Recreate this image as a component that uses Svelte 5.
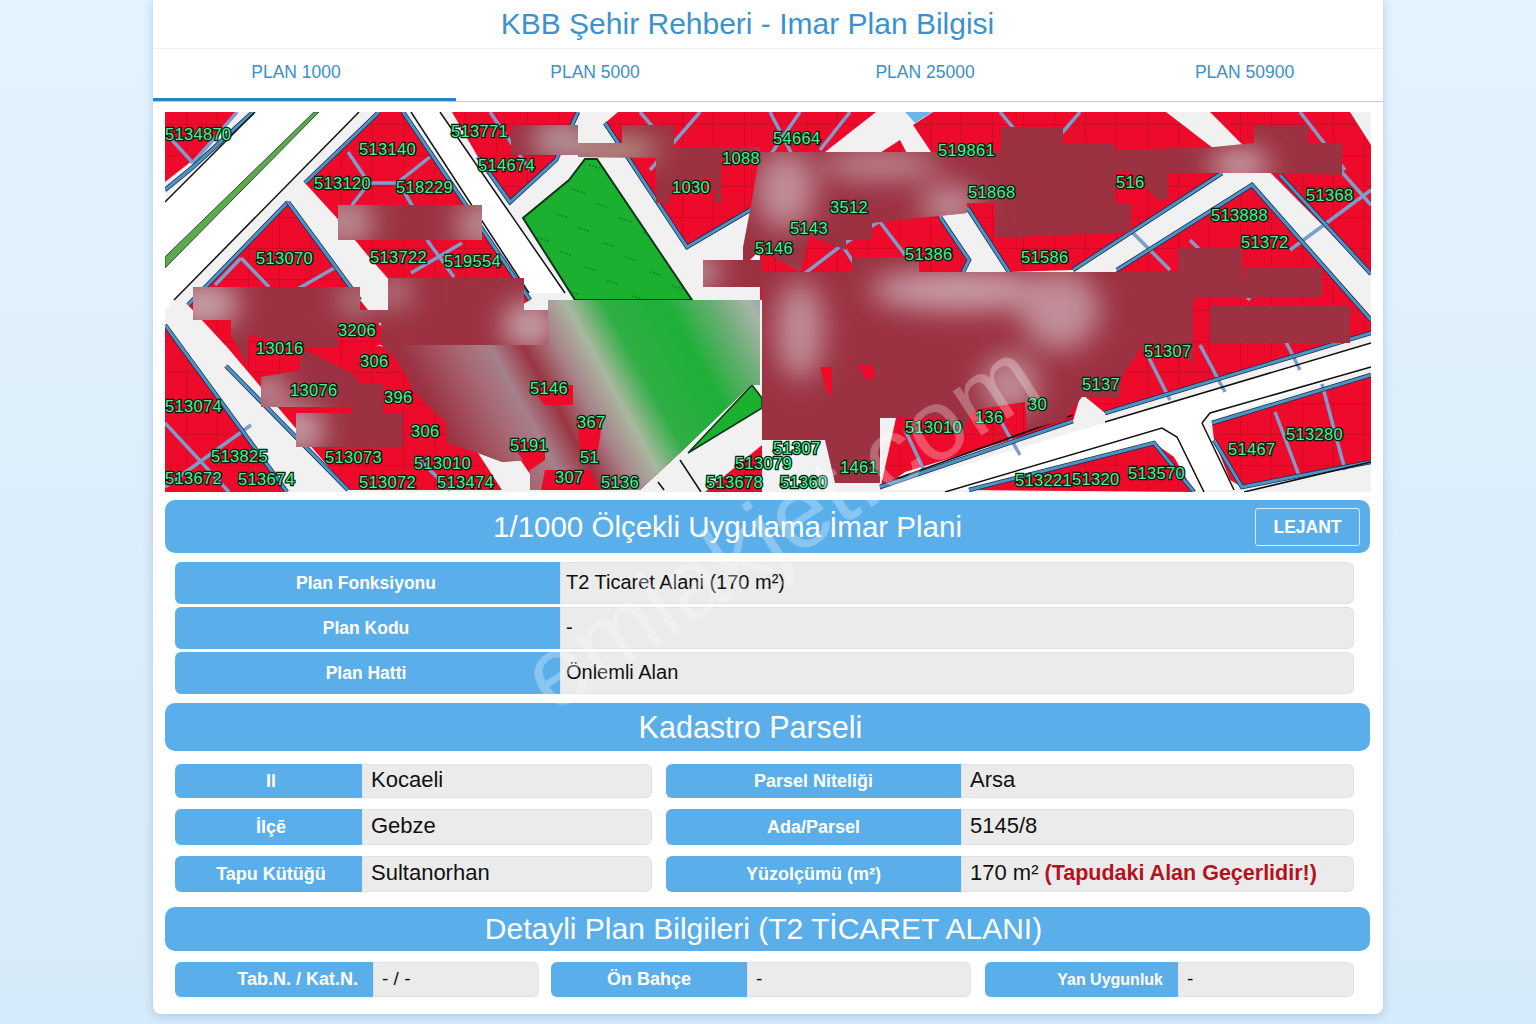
<script>
  const tabs = ['PLAN 1000', 'PLAN 5000', 'PLAN 25000', 'PLAN 50900'];

  const planRows = [
    { label: 'Plan Fonksiyonu', value: 'T2 Ticaret Alani (170 m²)' },
    { label: 'Plan Kodu', value: '-' },
    { label: 'Plan Hatti', value: 'Önlemli Alan' }
  ];

  // harita: ekran koordinatlari (viewBox 165 112 1206 380)
  const blocks = [
    '165,112 237,112 193,160 165,182',
    '379,112 403,112 472,213 530,300 480,330 407,300 369,257 336,217 305,183',
    '288,202 360,300 400,350 381,345 340,350 300,330 225,345 188,305',
    '165,325 287,492 165,492',
    '221,340 300,330 400,350 446,423 478,453 502,490 348,490',
    '530,370 610,400 640,490 541,490 500,430',
    '452,112 578,112 556,160 510,202 478,157',
    '605,123 618,112 876,112 755,207 687,247',
    '913,125 933,112 1166,112 1222,155 1222,173 1073,270 1009,272 967,207 950,180',
    '760,230 900,140 940,217 969,260 963,272 760,300',
    '1252,185 1371,320 1371,333 1105,413 1077,390 1100,300 1117,270',
    '1210,112 1350,112 1371,145 1371,274',
    '880,490 905,472 1073,421 1085,380 1000,330 900,400',
    '1212,423 1371,375 1371,462 1242,487 1230,480 1214,440',
    '969,490 1154,443 1174,457 1194,492',
    '705,492 762,445 762,492'
  ];

  const parcelLines = [
    '172,140 193,163', '193,163 237,112', '348,152 369,183', '430,157 397,183', '369,183 397,183', '352,205 369,183',
    '403,190 419,217', '462,243 411,273', '427,240 454,277', '241,258 269,287', '241,258 215,285', '296,290 336,267',
    '490,112 530,170', '640,112 690,170', '700,112 650,170',
    '770,112 800,170', '800,112 760,170', '850,112 820,150', '1000,112 1040,160', '1080,112 1030,170',
    '770,300 842,245 905,205', '842,245 860,272', '880,222 918,272',
    '1120,220 1170,270', '1190,240 1250,300', '1300,112 1345,170', '1340,170 1371,205', '1290,250 1371,190',
    '1145,350 1170,400', '1200,345 1225,392', '1280,330 1300,370', '1000,420 1020,455', '905,430 925,472',
    '165,423 229,492', '251,425 165,487', '420,460 450,490', '1275,412 1300,478', '1322,384 1345,470'
  ];

  const blueLines = [
    '165,190 193,167 253,112', '305,183 379,112', '403,112 530,300', '288,202 188,305', '288,202 360,300',
    '165,325 287,492', '226,366 348,490', '478,157 510,202 556,160 578,112', '605,123 687,247 755,207',
    '1073,270 1222,173', '1117,270 1252,185 1371,320', '1280,175 1371,274', '880,487 1073,421', '1105,413 1371,333',
    '1212,423 1371,375', '1214,440 1242,487 1371,462', '969,490 1154,443 1194,492', '967,207 1009,272', '940,217 969,260 963,272'
  ];

  const blackLines = [
    '165,202 255,112', '174,300 359,112', '411,112 529,293', '440,112 565,293', '893,480 1073,415', '1105,422 1371,343',
    '1202,423 1210,413 1371,367', '1202,423 1234,490', '945,492 1162,428 1177,437 1204,492', '1244,492 1371,462',
    '680,460 701,492', '658,482 664,490'
  ];

  const park = '585,159 597,159 692,300 575,300 523,218 569,180';

  // bulanik alanlar
  const fan = '397,345 548,345 548,300 760,300 760,385 751,385 680,453 640,490 530,490 530,460 502,462 478,453 446,443 446,423 415,393 397,360';
  const blurPolys = [
    '511,125 578,125 578,143 622,143 622,125 674,125 674,147 760,147 760,160 721,160 721,203 715,203 710,177 673,187 668,203 656,203 656,158 578,157 578,155 511,155',
    '760,152 1001,152 1001,127 1063,127 1063,143 1115,143 1115,150 1214,147 1254,143 1254,125 1308,125 1308,143 1342,143 1342,175 1280,173 1141,173 1168,172 1168,200 1158,200 1130,172 1115,172 1115,203 1131,203 1131,232 995,238 995,203 967,203 967,213 872,223 872,240 846,240 846,250 810,236 800,272 760,250 743,267 743,247 752,200',
    '703,260 762,260 762,287 703,287',
    '338,205 482,205 482,240 338,240',
    '762,272 852,272 852,257 919,257 919,272 1178,272 1178,248 1242,248 1242,283 1244,267 1322,267 1322,298 1193,298 1193,365 1180,345 1143,345 1121,378 1120,397 1082,397 1065,420 1027,430 1025,402 973,410 961,437 940,418 880,418 880,483 835,483 825,440 762,440',
    '1210,305 1350,305 1350,343 1210,343',
    '193,287 360,287 360,320 193,320',
    '388,278 524,278 524,310 388,310',
    '410,310 548,310 548,345 410,345',
    '231,320 338,320 338,347 304,347 249,335 247,365 231,335',
    '338,310 388,310 388,323 338,323',
    '381,310 410,310 410,345 397,360 381,345',
    '300,347 351,373 352,407 261,407 261,377 300,370',
    '351,373 360,383 383,383 383,413 352,413',
    '296,413 403,413 403,447 296,447',
    fan
  ];

  const holes = [
    '530,385 573,385 573,405 545,405',
    '577,417 603,417 598,450 580,450',
    '510,442 545,442 545,460 530,470',
    '545,470 590,470 600,490 541,490',
    '820,367 832,367 832,397 826,390',
    '858,365 874,365 874,380 866,380'
  ];

  const labels = [
    ['5134870', 165, 134], ['513140', 359, 149], ['513120', 314, 183], ['518229', 396, 187], ['513070', 256, 258],
    ['513722', 370, 257], ['519554', 444, 261], ['513771', 451, 131], ['514674', 478, 165], ['54664', 773, 138],
    ['519861', 938, 150], ['51368', 1306, 195], ['513888', 1211, 215], ['51372', 1241, 242], ['51586', 1021, 257],
    ['51386', 905, 254], ['513074', 165, 406], ['513825', 211, 456], ['513672', 165, 478], ['513674', 238, 479],
    ['513073', 325, 457], ['513010', 414, 463], ['513072', 359, 482], ['513474', 437, 482], ['306', 411, 431],
    ['5146', 530, 388], ['367', 577, 422], ['5191', 510, 445], ['5136', 601, 482], ['513010', 905, 427],
    ['51307', 773, 448], ['513079', 735, 463], ['513678', 706, 482], ['51360', 780, 482], ['1461', 840, 467],
    ['51467', 1228, 449], ['513280', 1286, 434], ['513221', 1015, 480], ['51320', 1072, 479], ['513570', 1128, 473],
    ['51307', 1144, 351], ['5137', 1082, 384], ['136', 975, 417], ['30', 1028, 404], ['3206', 338, 330],
    ['13016', 256, 348], ['13076', 290, 390], ['306', 360, 361], ['396', 384, 397], ['307', 555, 477], ['51', 580, 457],
    ['3512', 830, 207], ['5143', 790, 228], ['5146', 755, 248], ['51868', 968, 192], ['516', 1116, 182],
    ['1030', 672, 187], ['1088', 722, 158]
  ];

  const dots = [];
  for (let i = 0; i < 120; i++) {
    dots.push([525 + ((i * 47) % 170), 160 + ((i * 29) % 140)]);
  }
</script>

<div class="page">
  <div class="card">
    <h1 class="title">KBB Şehir Rehberi - Imar Plan Bilgisi</h1>

    <nav class="tabs">
      {#each tabs as tab, i}
        <div class="tab" class:active={i === 0}>{tab}</div>
      {/each}
    </nav>

    <div class="body">
      <svg class="map" viewBox="165 112 1206 380" width="1206" height="380">
        <defs>
          <pattern id="grid" width="31" height="31" patternUnits="userSpaceOnUse">
            <rect width="31" height="31" fill="#ee0a2a" />
            <path d="M31 0H0V31" fill="none" stroke="#a50a20" stroke-width="0.8" />
          </pattern>
          <linearGradient id="fan" gradientUnits="userSpaceOnUse" x1="450" y1="440" x2="770" y2="265">
            <stop offset="0" stop-color="#9b3141" />
            <stop offset="0.15" stop-color="#a86a76" />
            <stop offset="0.22" stop-color="#a5808a" />
            <stop offset="0.3" stop-color="#9b3542" />
            <stop offset="0.38" stop-color="#a8828a" />
            <stop offset="0.46" stop-color="#a9b8a0" />
            <stop offset="0.55" stop-color="#2fae45" />
            <stop offset="0.7" stop-color="#1eb038" />
            <stop offset="0.82" stop-color="#6fae78" />
            <stop offset="0.9" stop-color="#a8b5a8" />
            <stop offset="0.97" stop-color="#7f96c8" />
          </linearGradient>
          <filter id="soft" x="-50%" y="-50%" width="200%" height="200%">
            <feGaussianBlur stdDeviation="14" />
          </filter>
          <clipPath id="blurClip">
            {#each blurPolys as p}
              <polygon points={p} />
            {/each}
          </clipPath>
          <clipPath id="parkClip">
            <polygon points={park} />
          </clipPath>
        </defs>

        <rect x="165" y="112" width="1206" height="380" fill="#f1f1f1" />
        <polygon points="165,202 255,112 359,112 174,300 165,310" fill="#fff" />
        <polygon points="411,112 440,112 565,293 529,293" fill="#fff" />
        <polygon points="880,490 1371,343 1371,367 1202,423 1234,490" fill="#fff" />
        <polygon points="905,112 932,112 915,123" fill="#6fb6e8" />
        <polygon points="314,112 319,112 165,268 165,257" fill="#5fa84f" stroke="#24552a" stroke-width="1" />

        {#each blocks as p}
          <polygon points={p} fill="url(#grid)" />
        {/each}

        <polygon points={park} fill="#1bb02f" stroke="#10351a" stroke-width="2" />
        <g clip-path="url(#parkClip)">
          {#each dots as d}
            <circle cx={d[0]} cy={d[1]} r="0.8" fill="#0c6a1d" />
          {/each}
        </g>
        <polygon points="688,453 752,385 762,398 762,408" fill="#1bb02f" stroke="#10351a" stroke-width="1.5" />

        {#each parcelLines as p}
          <polyline points={p} fill="none" stroke="#7e9ccc" stroke-width="3.5" />
        {/each}
        {#each blueLines as p}
          <polyline points={p} fill="none" stroke="#12304e" stroke-width="4.5" />
          <polyline points={p} fill="none" stroke="#4f93c4" stroke-width="3" />
        {/each}
        {#each blackLines as p}
          <polyline points={p} fill="none" stroke="#111" stroke-width="1.5" />
        {/each}

        <g clip-path="url(#blurClip)">
          <rect x="165" y="112" width="1206" height="380" fill="#9b3141" />
          <g filter="url(#soft)">
            <ellipse cx="785" cy="190" rx="30" ry="40" fill="#c08d98" />
            <ellipse cx="880" cy="165" rx="60" ry="14" fill="#c08d98" />
            <ellipse cx="950" cy="205" rx="30" ry="20" fill="#c08d98" />
            <ellipse cx="1240" cy="165" rx="30" ry="16" fill="#cfa9b0" />
            <ellipse cx="610" cy="150" rx="50" ry="10" fill="#bfc0a8" />
            <ellipse cx="560" cy="140" rx="28" ry="20" fill="#b59aa0" />
            <ellipse cx="960" cy="290" rx="90" ry="20" fill="#c9a0aa" />
            <ellipse cx="1060" cy="310" rx="40" ry="40" fill="#c08d98" />
            <ellipse cx="800" cy="330" rx="24" ry="50" fill="#c08d98" />
            <ellipse cx="1010" cy="385" rx="28" ry="30" fill="#c08d98" />
            <ellipse cx="345" cy="222" rx="30" ry="26" fill="#b98a92" />
            <ellipse cx="485" cy="225" rx="30" ry="26" fill="#b98a92" />
            <ellipse cx="205" cy="305" rx="34" ry="24" fill="#c6a3aa" />
            <ellipse cx="355" cy="300" rx="16" ry="16" fill="#b98a92" />
            <ellipse cx="395" cy="292" rx="16" ry="16" fill="#b98a92" />
            <ellipse cx="530" cy="325" rx="28" ry="24" fill="#c6a3aa" />
            <ellipse cx="300" cy="430" rx="24" ry="24" fill="#c6a3aa" />
            <ellipse cx="268" cy="392" rx="18" ry="18" fill="#c6a3aa" />
            <ellipse cx="700" cy="272" rx="20" ry="16" fill="#c6a3aa" />
          </g>
          <polygon points={fan} fill="url(#fan)" />
        </g>

        {#each holes as p}
          <polygon points={p} fill="#ee0a2a" />
        {/each}
        {#each labels as l}
          <text class="parcel" x={l[1]} y={l[2] + 6}>{l[0]}</text>
        {/each}
      </svg>

      <div class="bar first">
        <span class="bar-title">1/1000 Ölçekli Uygulama İmar Plani</span>
        <button class="legend" type="button">LEJANT</button>
      </div>

      <div class="plan-rows">
        {#each planRows as row}
          <div class="row plan-row">
            <div class="key">{row.label}</div>
            <div class="val">{row.value}</div>
          </div>
        {/each}
      </div>

      <div class="bar second">Kadastro Parseli</div>

      <div class="parcel-grid">
        <div class="row cell-l short"><div class="key">Il</div><div class="val">Kocaeli</div></div>
        <div class="row cell-r short"><div class="key">Parsel Niteliği</div><div class="val">Arsa</div></div>
        <div class="row cell-l"><div class="key">İlçē</div><div class="val">Gebze</div></div>
        <div class="row cell-r"><div class="key">Ada/Parsel</div><div class="val">5145/8</div></div>
        <div class="row cell-l"><div class="key">Tapu Kütüğü</div><div class="val">Sultanorhan</div></div>
        <div class="row cell-r">
          <div class="key">Yüzolçümü (m²)</div>
          <div class="val">170 m² <b class="warn">(Tapudaki Alan Geçerlidir!)</b></div>
        </div>
      </div>

      <div class="bar third">Detayli Plan Bilgileri (T2 TİCARET ALANI)</div>

      <div class="detail-grid">
        <div class="row d1"><div class="key end">Tab.N. / Kat.N.</div><div class="val">- / -</div></div>
        <div class="row d2"><div class="key">Ön Bahçe</div><div class="val">-</div></div>
        <div class="row d3"><div class="key end small">Yan Uygunluk</div><div class="val">-</div></div>
      </div>
    </div>

    <div class="watermark">emlakjet.com</div>
  </div>
</div>

<style>
  :global(body) {
    margin: 0;
    background: #d9ecfb;
    font-family: 'Liberation Sans', Arial, sans-serif;
  }

  .page {
    min-height: 1024px;
    background: linear-gradient(180deg, #e4f2fd 0%, #d5eafa 100%);
    overflow: hidden;
  }

  .card {
    position: relative;
    width: 1230px;
    height: 1014px;
    margin: 0 auto;
    background: #fff;
    border-radius: 0 0 8px 8px;
    box-shadow: 0 2px 10px rgba(70, 120, 170, 0.3);
    overflow: hidden;
  }

  .title {
    height: 49px;
    margin: 0;
    padding-right: 41px;
    border-bottom: 1px solid #f1f1f1;
    box-sizing: border-box;
    color: #3a92cf;
    font-size: 30px;
    font-weight: 400;
    line-height: 48px;
    text-align: center;
  }

  .tabs {
    display: grid;
    grid-template-columns: 303px 278px 382px 1fr;
    height: 53px;
    border-bottom: 1px solid #c4c8cc;
    box-sizing: border-box;
  }

  .tab {
    color: #3d8fc6;
    font-size: 17.5px;
    line-height: 46px;
    text-align: center;
  }

  .tab:first-child {
    padding-right: 17px;
    box-sizing: border-box;
  }

  .tab:last-child {
    padding-right: 10px;
  }

  .tab.active {
    height: 52px;
    border-bottom: 3px solid #2f80c0;
    box-sizing: border-box;
  }

  .body {
    padding: 10px 12px 0;
  }

  .map {
    display: block;
  }

  .parcel {
    fill: #4cf095;
    stroke: #02200f;
    stroke-width: 2.6px;
    paint-order: stroke;
    font-size: 16.5px;
    letter-spacing: 0.3px;
  }

  .bar {
    display: flex;
    align-items: center;
    justify-content: center;
    margin-right: 1px;
    background: #5aafea;
    border-radius: 10px;
    color: #fff;
    font-size: 30px;
  }

  .first {
    position: relative;
    height: 53px;
    margin-top: 8px;
    padding-right: 80px;
    font-size: 29.5px;
  }

  .second {
    height: 48px;
    margin-top: 9px;
    padding-right: 34px;
    font-size: 30.5px;
  }

  .third {
    height: 44px;
    margin-top: 15px;
    padding-right: 8px;
  }

  .legend {
    position: absolute;
    top: 8px;
    right: 10px;
    width: 105px;
    height: 38px;
    background: transparent;
    border: 1px solid #d5ecfb;
    border-radius: 3px;
    color: #fff;
    font: 700 17.5px 'Liberation Sans', Arial, sans-serif;
  }

  .row {
    display: grid;
    border-radius: 6px;
    overflow: hidden;
  }

  .key {
    display: flex;
    align-items: center;
    justify-content: center;
    background: #5aafea;
    color: #fff;
    font-size: 18px;
    font-weight: 700;
  }

  .key.end {
    justify-content: flex-end;
    padding-right: 15px;
  }

  .key.small {
    font-size: 16px;
  }

  .val {
    display: flex;
    align-items: center;
    gap: 6px;
    padding: 0 0 2px 9px;
    background: #ebebeb;
    box-shadow: inset 0 0 0 1px #e2e2e2;
    border-radius: 0 6px 6px 0;
    color: #111;
    font-size: 22px;
  }

  .plan-rows {
    display: grid;
    gap: 3px;
    margin: 9px 17px 0 10px;
  }

  .plan-row {
    grid-template-columns: 385px 1fr;
    height: 42px;
  }

  .plan-row .key {
    padding-right: 3px;
    font-size: 17.5px;
  }

  .plan-row .val {
    padding-left: 6px;
    font-size: 20px;
  }

  .parcel-grid {
    display: grid;
    grid-template-columns: 477px 688px;
    column-gap: 14px;
    row-gap: 11px;
    margin: 13px 17px 0 10px;
  }

  .cell-l {
    grid-template-columns: 187px 1fr;
    height: 36px;
  }

  .cell-l .key {
    padding-left: 5px;
  }

  .cell-r {
    grid-template-columns: 295px 1fr;
    height: 36px;
  }

  .short {
    height: 34px;
  }

  .warn {
    color: #b5121f;
    font-size: 21.5px;
  }

  .detail-grid {
    display: grid;
    grid-template-columns: 364px 420px 371px;
    column-gap: 12px;
    margin: 11px 17px 0 10px;
  }

  .detail-grid .row {
    height: 35px;
  }

  .detail-grid .val {
    font-size: 19px;
  }

  .d1 {
    grid-template-columns: 198px 1fr;
  }

  .d2 {
    grid-template-columns: 196px 1fr;
  }

  .d3 {
    grid-template-columns: 193px 1fr;
    margin-left: 2px;
  }

  .watermark {
    position: absolute;
    top: 475px;
    left: 332px;
    color: rgba(255, 255, 255, 0.28);
    font-size: 100px;
    line-height: 1;
    white-space: nowrap;
    transform: rotate(-33deg);
    pointer-events: none;
  }
</style>
